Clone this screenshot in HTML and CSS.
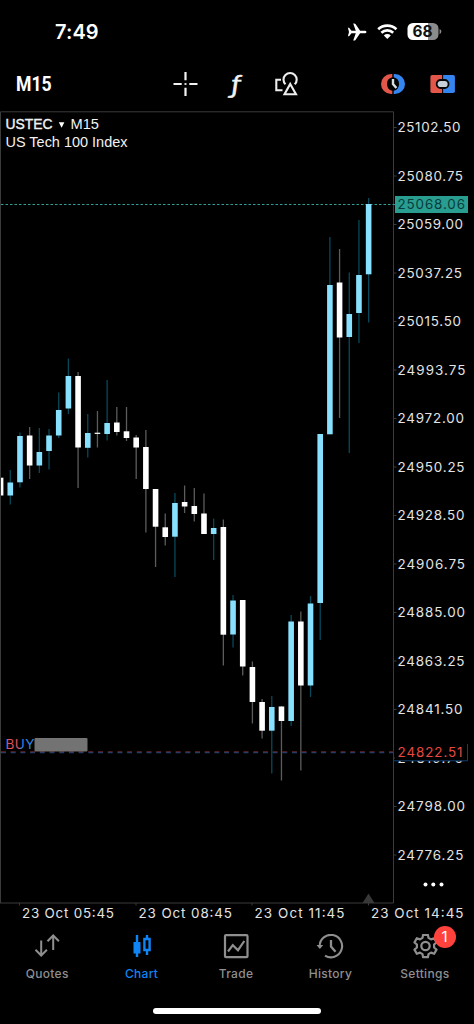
FILE: index.html
```
<!DOCTYPE html>
<html lang="en">
<head>
<meta charset="utf-8">
<title>USTEC M15</title>
<link rel="stylesheet" href="styles.css">
</head>
<body>
<div class="app">
  <div class="status">
    <span class="time">7:49</span>
    <svg class="status-icons" width="96" height="20" viewBox="346 22 96 20">
      <path fill="#fff" d="M366.500 32c0 .9-1 1.300-2.200 1.300h-4.200l-4.600 6.600c-.3.5-.7.7-1.200.7h-1.100l2.600-7.300h-4.300l-2 2.500c-.2.3-.5.4-.8.4h-.8l1.100-4.200-1.100-4.200h.8c.3 0 .6.1.8.4l2 2.500h4.300l-2.600-7.300h1.100c.5 0 .9.2 1.200.7l4.600 6.600h4.200c1.200 0 2.200.4 2.200 1.300z"/>
      <g fill="none" stroke="#fff" stroke-width="2.700">
        <path d="M378.200 29.200a13.200 13.200 0 0 1 18.200 0"/>
        <path d="M381.400 32.700a8.600 8.600 0 0 1 11.800 0"/>
      </g>
      <path fill="#fff" d="M383.800 35.500a5 5 0 0 1 7 0l-3.500 3.600z"/>
      <path fill="#fff" d="M413 23h15v17h-15a5.500 5.500 0 0 1-5.500-5.500v-6a5.500 5.500 0 0 1 5.500-5.500z"/>
      <path fill="#8b8b8b" d="M428 23h5a5.500 5.500 0 0 1 5.500 5.500v6a5.500 5.500 0 0 1-5.500 5.500h-5zM439.600 29q1.800.9 1.800 2.600t-1.800 2.600z"/>
      <text class="battery" x="412.500" y="37" textLength="20" lengthAdjust="spacingAndGlyphs">68</text>
    </svg>
  </div>
  <div class="toolbar">
    <span class="period">M15</span>
    <div class="tools">
      <svg width="26" height="26" viewBox="0 0 26 26" stroke="#f2f2f2" stroke-width="2.200"><path d="M13.500 1v8.200M13.500 16.800V25M1.500 13h8.200M17.300 13h8.200"/><path d="M12.500 13h2" stroke-width="1.800"/></svg>
      <span class="fn">ƒ</span>
      <svg width="26" height="26" viewBox="0 0 26 26" fill="none" stroke="#ededed" stroke-width="2.100"><path d="M7 8.700H2.300v10.600h6.200"/><path d="M11.500 13.300a6.600 6.600 0 1 1 9.200 0"/><path d="M16.200 13l5.800 10.300H10.500z"/></svg>
    </div>
    <div class="modes">
      <svg width="26" height="22" viewBox="0 0 26 22">
        <path fill="#e2574a" d="M12.300 1v3.200a7 7 0 0 0 0 13.600V21H11a10 10 0 0 1 0-20z"/>
        <path fill="#3485f0" d="M13.700 1v3.200a7 7 0 0 1 0 13.600V21H15a10 10 0 0 0 0-20z"/>
        <path fill="none" stroke="#d6dce0" stroke-width="2.400" d="M13 6v5l3.400 4"/>
      </svg>
      <svg width="26" height="22" viewBox="0 0 26 22">
        <path fill="#e2574a" d="M2.200 2H12.100v18h-9.900a1.800 1.800 0 0 1-1.800-1.800V3.800A1.800 1.800 0 0 1 2.200 2z"/>
        <path fill="#3485f0" d="M13.100 2h10a1.800 1.800 0 0 1 1.800 1.800v14.400a1.800 1.800 0 0 1-1.800 1.800h-10z"/>
        <rect x="6.700" y="7" width="11.800" height="8" rx="3.800" fill="#c7d0d8" stroke="#050505" stroke-width="1.800"/>
      </svg>
    </div>
  </div>
  <svg class="chart" width="474" height="812" viewBox="0 111 474 812">
    <defs>
      <linearGradient id="buy" gradientUnits="userSpaceOnUse" x1="5" x2="34" y1="0" y2="0">
        <stop offset="0" stop-color="#3f7fd8"/><stop offset=".07" stop-color="#4d78cc"/><stop offset=".09" stop-color="#e4505a"/><stop offset=".34" stop-color="#e4505a"/><stop offset=".5" stop-color="#e4505a"/><stop offset=".54" stop-color="#2f86e6"/><stop offset="1" stop-color="#2f86e6"/>
      </linearGradient>
      <clipPath id="plot"><rect x="1" y="112" width="392" height="791"/></clipPath>
    </defs>
    <path class="frame" d="M.5 903V111.800H393.500V903H0M19.500 903v2.500M136 903v2.500M252 903v2.500M368.500 903v2.500"/>
    <path fill="#383838" d="M362.500 903l6-9.500 6 9.500z"/>
    <path stroke="#2fa094" stroke-dasharray="2.500 2" d="M1 204.500h394"/>
    <path stroke="#4c1d20" stroke-dasharray="5 4.700" d="M1 751.500h393"/>
    <path stroke="#283c64" stroke-width="1.300" stroke-dasharray="5 4.700" d="M1 752.700h393"/>
    <g id="candles" clip-path="url(#plot)"></g>
    <text class="symbol strong" x="5.500" y="129.300" textLength="47" lengthAdjust="spacingAndGlyphs">USTEC</text>
    <path fill="#fff" d="M58.800 122.300h5.600l-2.800 5.400z"/>
    <text class="symbol" x="70.500" y="129.300" textLength="28.500" lengthAdjust="spacingAndGlyphs">M15</text>
    <text class="symbol" x="5.500" y="147.300" textLength="122" lengthAdjust="spacingAndGlyphs">US Tech 100 Index</text>
    <text x="5.500" y="748.700" font-size="13.500" fill="url(#buy)" textLength="29" lengthAdjust="spacing">BUY</text>
    <rect x="34.500" y="738" width="53" height="13.600" rx="1" fill="#737373"/>
    <g id="prices"></g>
    <rect x="395" y="196" width="73" height="17" fill="#2a9d91"/>
    <text class="label last" x="397.500" y="209.300" textLength="67.500">25068.06</text>
    <rect x="395" y="744" width="72" height="17" fill="#000"/>
    <path fill="none" stroke="#123e70" d="M394 760.800h73.500V744"/>
    <text class="label red" x="397.500" y="756.700" textLength="65">24822.51</text>
    <g fill="#fff"><circle cx="425.500" cy="884.500" r="2"/><circle cx="433.300" cy="884.500" r="2"/><circle cx="441.500" cy="884.500" r="2"/></g>
    <text class="label" x="22" y="917.700" textLength="92">23 Oct 05:45</text>
    <text class="label" x="138.500" y="917.700" textLength="93.500">23 Oct 08:45</text>
    <text class="label" x="254.500" y="917.700" textLength="90">23 Oct 11:45</text>
    <text class="label" x="371" y="917.700" textLength="92.500">23 Oct 14:45</text>
  </svg>
  <nav class="tabs">
    <div class="tab">
      <svg width="28" height="28" viewBox="0 0 28 28" fill="none" stroke="#8f8f8f" stroke-width="2"><path d="M8.200 6.500v14.500M2.500 15.800l5.700 5.700 5.700-5.700M20.200 16V1.800M14.500 7.200l5.700-5.700 5.700 5.700"/></svg>
      <span>Quotes</span>
    </div>
    <div class="tab active">
      <svg width="28" height="28" viewBox="0 0 28 28" fill="none" stroke="#0f84f5"><path stroke-width="2.400" d="M9 1v22M19 1v4M19 17v4"/><path fill="#0f84f5" stroke="none" d="M5.500 8h7v11.500h-7z"/><path stroke-width="2.400" d="M16.400 5h5.200v11h-5.200z"/></svg>
      <span>Chart</span>
    </div>
    <div class="tab">
      <svg width="28" height="28" viewBox="0 0 28 28" fill="none" stroke="#8f8f8f" stroke-width="2.200"><rect x="3" y="1.200" width="22.500" height="22" rx="1"/><path d="M6 17.500l4.800-6.300 5.200 5 6.300-9.200"/></svg>
      <span>Trade</span>
    </div>
    <div class="tab">
      <svg width="28" height="28" viewBox="0 0 28 28" fill="none" stroke="#8f8f8f" stroke-width="2.100"><path d="M3.700 12A11.200 11.200 0 1 1 9 21.600"/><path d="M4.500 16.500a11 11 0 0 0 1.700 2.700" stroke="#000" stroke-width="3"/><path d="M15 6v6.500l4.500 5.200" stroke-width="2.300"/><path fill="#8f8f8f" stroke="none" d="M.5 11h6.700L3.900 15z"/></svg>
      <span>History</span>
    </div>
    <div class="tab">
      <svg width="28" height="28" viewBox="-14.500 -12 28 28" fill="none" stroke="#8f8f8f" stroke-width="2.200" stroke-linejoin="round"><path d="M-3-8.100-2.400-11.200H2.400L3-8.100 5.500-6.600 8.700-7.800 11-3.600 8.600-1.500V1.500L11 3.600 8.700 7.800 5.500 6.600 3 8.100 2.400 11.200H-2.400L-3 8.100-5.500 6.600-8.700 7.800-11 3.600-8.600 1.500V-1.500L-11-3.600-8.700-7.800-5.500-6.600z"/><circle r="4.200"/></svg>
      <span>Settings</span>
      <b class="badge">1</b>
    </div>
  </nav>
  <div class="home"></div>
</div>
<script src="chart.js"></script>
</body>
</html>
```
FILE: styles.css
```
body { margin: 0; background: #000; color: #fff; font-family: Inter, "Liberation Sans", sans-serif; }
.app { width: 474px; height: 1024px; overflow: hidden; display: flex; flex-direction: column; background: #000; }
.status { box-sizing: border-box; height: 56px; padding: 20px 32px 0 55px; display: flex; justify-content: space-between; align-items: flex-start; }
.time { font-size: 20px; line-height: 24px; font-weight: 600; letter-spacing: .1px; }
.status-icons { margin-top: 2px; }
.battery { font: 700 16px Inter, sans-serif; fill: #111; }
.toolbar { height: 55px; display: flex; align-items: center; padding: 0 18px 0 16px; }
.period { width: 156px; font: 700 21px Roboto, sans-serif; transform: scaleX(.84); transform-origin: left; }
.tools { display: flex; align-items: center; gap: 25px; }
.fn { width: 26px; height: 32px; font: italic 400 25px/30px Lato, sans-serif; text-align: center; color: #f2f2f2; transform: scaleX(1.2); -webkit-text-stroke: .4px #f2f2f2; }
.modes { display: flex; align-items: center; gap: 24px; margin-left: auto; }
.chart { display: block; flex: none; }
.chart text { font-family: Inter, sans-serif; }
.chart .symbol { font: 15px "Liberation Sans", sans-serif; fill: #f2f2f2; }
.chart .strong { stroke: #f2f2f2; stroke-width: .4px; }
.frame { fill: none; stroke: #3b3b3b; }
.label { font-size: 13.4px; fill: #e4e4e4; }
.label.last { fill: #063c39; }
.label.red { fill: #e8483f; }
.up { fill: #87e0fd; }
.down { fill: #fff; }
.wick-up { stroke: #07495a; stroke-width: 1.300px; }
.wick-down { stroke: #5c5c5c; stroke-width: 1.300px; }
.tabs { height: 72px; display: flex; padding: 10px 2px 0 0; box-sizing: border-box; }
.tab { position: relative; flex: 1; display: flex; flex-direction: column; align-items: center; gap: 4px; font-size: 12px; font-weight: 500; line-height: 16px; letter-spacing: .3px; color: #8f8f8f; padding-top: 1px; }
.active { color: #0f84f5; }
.badge { position: absolute; left: 56px; top: -7px; width: 22px; height: 22px; border-radius: 50%; background: #ff423b; color: #fff; font-size: 15px; line-height: 22px; font-weight: 400; text-align: center; letter-spacing: 0; }
.home { width: 168px; height: 6px; margin: 13px 0 0 153px; border-radius: 3px; background: #fff; }
```
FILE: chart.js
```
// Each candle: direction, high, body top, body bottom, low.
const candles = [
  ['d',478,477.7,495.5,495],['u',470,482.5,495.5,504.5],['u',432.5,436,482.3,487.5],['d',427,435.5,465.5,479],
  ['u',428,452,465.5,473],['u',429,435.5,451,469.5],['u',392.5,410,435.5,438],['u',358.5,376,408.5,414],
  ['d',372,376,447.5,488],['u',414,433,447.8,457.5],['d',411,432.7,433.9,447.5],['u',380,423,434,440.5],
  ['d',407,422.5,432,435.5],['d',407,431.3,438,441],['d',435,437.5,447.5,479],['d',430,447,489,532.5],
  ['d',489,489,526.7,567],['d',513.5,527.3,537,545.5],['u',493,503,536.7,577],['d',485.5,502,506.5,513],
  ['d',488,506,514,521.5],['d',493.5,513.5,534,534],['u',518.5,528,534,560],['d',519.5,527,634.7,665.5],
  ['u',595,600.5,634.5,647.5],['d',600,600,666.5,675.5],['d',661.5,667,702,723.5],['d',699,702,730.7,738.5],
  ['u',696,707,730.7,773.5],['d',706,706.5,721,780.5],['u',615,621.5,721,726],['d',611.5,621.5,685.5,770.5],
  ['u',596,603.5,685.5,697],['u',434,434,603,640],['u',237,285,434.3,434],['d',249,282.5,337.5,418],
  ['u',272.5,314,337,453],['u',220,275,313,343],['u',198,204,274.3,322.5]
];
// Candle spacing, in pixels, along the time axis.
const STEP = 9.685;
document.getElementById('candles').innerHTML = candles.map(([dir, hi, top, bottom, lo], i) => {
  const x = 0.6 + i * STEP;
  const name = dir === 'u' ? 'up' : 'down';
  return `<path class="wick-${name}" d="M${x} ${hi}V${lo}"/><rect class="${name}" x="${x - 2.8}" y="${top}" width="5.6" height="${bottom - top}"/>`;
}).join('');

// Price labels with their widths.
const prices = [['25102.50',63],['25080.75',65.5],['25059.00',65.5],['25037.25',64.5],['25015.50',63.5],['24993.75',68],
  ['24972.00',66.5],['24950.25',67],['24928.50',67],['24906.75',67.5],['24885.00',67.5],['24863.25',67],
  ['24841.50',65],['24819.75',65.5],['24798.00',67.5],['24776.25',66]];
document.getElementById('prices').innerHTML = prices.map(([text, width], i) => {
  const y = 127.5 + i * 48.5;
  return `<text class="label" x="397.5" y="${y + 4.7}" textLength="${width}">${text}</text>` +
    `<path stroke="#3b3b3b" d="M394 ${y}h2.5"/>`;
}).join('');
```
